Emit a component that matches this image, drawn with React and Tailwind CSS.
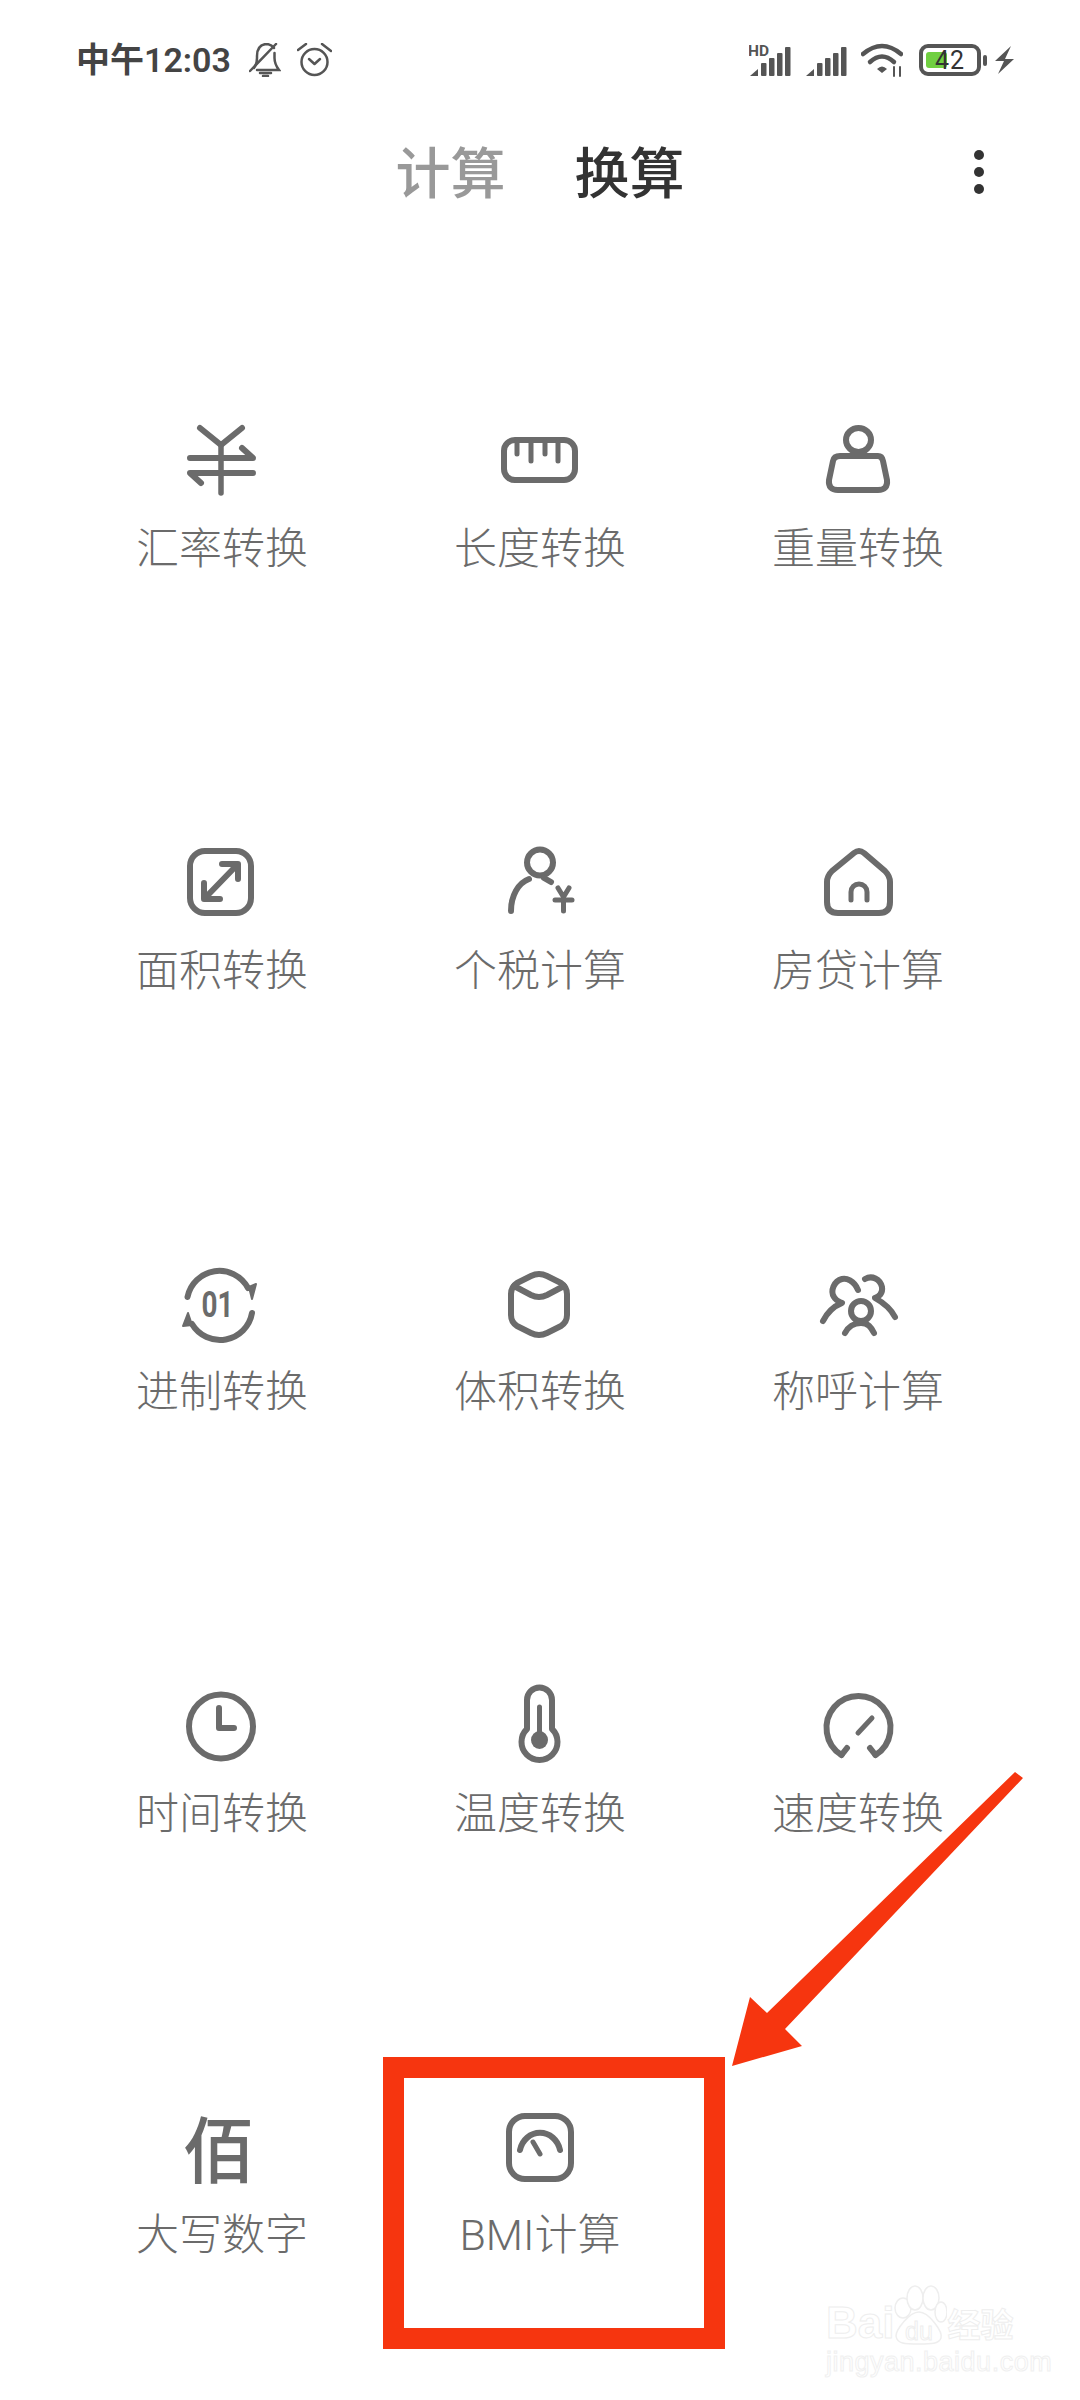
import React from "react";

const CJK = "font-['Roboto','Noto_Sans_CJK_SC',sans-serif]";

// every grid icon is drawn on the same 84x84 box
const Icon = ({ children, className = "" }) => (
  <svg
    viewBox="0 0 84 84"
    className={`w-[84px] h-[84px] ${className}`}
    fill="none"
    stroke="#6b6b6b"
    strokeWidth="6"
    strokeLinecap="round"
    strokeLinejoin="round"
  >
    {children}
  </svg>
);

const YenIcon = () => (
  <Icon>
    <path d="M20 10 L41 27 L62 10" />
    <path d="M41 27 V75" strokeWidth="5.5" />
    <path d="M10 40 H73 L62 30" />
    <path d="M73 55 H10 L21 65" />
  </Icon>
);

const RulerIcon = () => (
  <Icon>
    <rect x="6" y="22" width="71" height="40" rx="11" />
    <path d="M19 24 V36 M33 24 V43 M47 24 V36 M60 24 V43" strokeWidth="5" />
  </Icon>
);

const WeightIcon = () => (
  <Icon>
    <ellipse cx="42.5" cy="22" rx="12.5" ry="12" />
    <path d="M24 38 H62 Q66 38 67 43 L71 62 Q72 72 62 72 H22 Q12 72 13 62 L17 43 Q18 38 24 38 Z" />
  </Icon>
);

const AreaIcon = () => (
  <Icon>
    <rect x="10" y="11" width="61" height="62" rx="15" />
    <path d="M57 25 L25 58" />
    <path d="M42 24 H58 V39" />
    <path d="M24 43 V59 H40" />
  </Icon>
);

const TaxIcon = () => (
  <Icon>
    <circle cx="42" cy="22.5" r="13" />
    <path d="M31 39 C20 43 13 56 13 71" />
    <path d="M46 38 L53 42" />
    <path d="M60 48 L65.5 57 L71 48 M65.5 57 V71" strokeWidth="5" />
    <path d="M57 60 H74" strokeWidth="5" />
  </Icon>
);

const HouseIcon = () => (
  <Icon>
    <path d="M38 13 Q43 9 48 13 L69 31 Q74 36 74 42 V62 Q74 73 63 73 H22 Q11 73 11 62 V42 Q11 36 16 31 Z" />
    <path d="M35 60 V52 A8 8 0 0 1 51 52 V60" strokeWidth="5" />
  </Icon>
);

const BinaryIcon = () => (
  <Icon>
    <path d="M7.5 36 A32.5 32.5 0 0 1 68 27" />
    <path d="M12 63 A32.5 32.5 0 0 0 72 52" />
    <path d="M69 26 L76 23 L72 38 Z" fill="#6b6b6b" strokeWidth="2" />
    <path d="M3 65 L8 52 L12 64 Z" fill="#6b6b6b" strokeWidth="2" />
    <text
      x="37.5"
      y="56"
      textAnchor="middle"
      fontFamily="Roboto"
      fontWeight="700"
      fontSize="36"
      textLength="32"
      lengthAdjust="spacingAndGlyphs"
      fill="#6b6b6b"
      stroke="none"
    >
      01
    </text>
  </Icon>
);

const CubeIcon = () => (
  <Icon>
    <path d="M33 15 Q41 11 49 15 L63 22 Q69 26 69 33 V54 Q69 61 63 65 L49 72 Q41 76 33 72 L19 65 Q13 61 13 54 V33 Q13 26 19 22 Z" />
    <path d="M16 25 L33 34 Q41 38 49 34 L66 25" />
  </Icon>
);

const PeopleIcon = () => (
  <Icon>
    <path d="M42 29 C38 19 30 17 26 18 C18 20 14 30 18 36 C20 40 24 41 26 42 C16 46 10 54 7 60" />
    <path d="M49 18 C56 14 64 18 66 26 C67 32 63 36 59 37 C68 42 75 48 79 56" />
    <circle cx="45" cy="50" r="10" />
    <path d="M29 72 C32 66 38 62 45 62 C52 62 55 66 58 72" />
  </Icon>
);

const ClockIcon = () => (
  <Icon>
    <circle cx="41" cy="43.5" r="32" />
    <path d="M39 25 V45 H54" />
  </Icon>
);

const ThermoIcon = () => (
  <Icon>
    <path d="M29 17 A12.5 12.5 0 0 1 54 17 V46 A18 18 0 1 1 29 46 Z" />
    <path d="M41.5 24 V50" strokeWidth="5" />
    <ellipse cx="41.5" cy="57" rx="8.5" ry="9" fill="#6b6b6b" stroke="none" />
  </Icon>
);

const SpeedIcon = () => (
  <Icon>
    <path d="M25.5 72 A32 32 0 1 1 59.5 72" />
    <path d="M25.5 72 L31 65 M59.5 72 L54 65" />
    <path d="M42 50 L56 35" strokeWidth="5" />
  </Icon>
);

const ScaleIcon = () => (
  <Icon>
    <rect x="11" y="12" width="62" height="63" rx="16" />
    <path d="M22 46 A20.5 22 0 0 1 62 46" />
    <path d="M35 38 L42 50" strokeWidth="5" />
  </Icon>
);

const items = [
  { label: "汇率转换", icon: <YenIcon /> },
  { label: "长度转换", icon: <RulerIcon /> },
  { label: "重量转换", icon: <WeightIcon /> },
  { label: "面积转换", icon: <AreaIcon /> },
  { label: "个税计算", icon: <TaxIcon /> },
  { label: "房贷计算", icon: <HouseIcon /> },
  { label: "进制转换", icon: <BinaryIcon /> },
  { label: "体积转换", icon: <CubeIcon /> },
  { label: "称呼计算", icon: <PeopleIcon /> },
  { label: "时间转换", icon: <ClockIcon /> },
  { label: "温度转换", icon: <ThermoIcon /> },
  { label: "速度转换", icon: <SpeedIcon /> },
  {
    label: "大写数字",
    icon: (
      <span className="block w-[84px] h-[84px] pr-[6px] leading-[84px] text-center text-[72px] font-medium text-[#6b6b6b] font-['Noto_Sans_CJK_SC',sans-serif]">
        佰
      </span>
    ),
  },
  { label: "BMI计算", icon: <ScaleIcon /> },
];

const SignalBars = ({ hd }) => (
  <svg viewBox="0 -4 42 34" className="w-[42px] h-[34px]" fill="#555555">
    {hd && (
      <text x="-1" y="9" fontFamily="Roboto" fontWeight="700" fontSize="15.5">
        HD
      </text>
    )}
    <path d="M1 29 L9 22 V29 Z" />
    <rect x="12" y="16" width="5.5" height="13" rx="1" />
    <rect x="20" y="11" width="5.5" height="18" rx="1" />
    <rect x="28" y="6" width="5.5" height="23" rx="1" />
    <rect x="36" y="0" width="5.5" height="29" rx="1" />
  </svg>
);

const StatusBar = () => (
  <div className="h-[120px] flex items-center justify-between pl-[76px] pr-[66px]">
    <div className="flex items-center">
      <span className={`text-[34px] leading-[44px] font-semibold text-[#444444] ${CJK}`}>中午12:03</span>
      {/* muted bell */}
      <svg viewBox="0 0 32 34" className="w-[32px] h-[34px] ml-[18px]" fill="none" stroke="#555555" strokeWidth="2.5" strokeLinecap="round">
        <path d="M5 25 Q8 21 8 15 V13 Q8 2 17 1 Q22 1 25 5" />
        <path d="M25.5 10 V15 Q25.5 21 30 27 H8" />
        <path d="M11 30 H22 M14 33 H19" />
        <path d="M27 1 L1 28" />
      </svg>
      {/* alarm */}
      <svg viewBox="0 0 35 34" className="w-[35px] h-[34px] ml-[16px]" fill="none" stroke="#555555" strokeWidth="2.5" strokeLinecap="round" strokeLinejoin="round">
        <circle cx="17.5" cy="19" r="13" />
        <path d="M1 7 L9 1 M25 1 L34 8" />
        <path d="M12 16 L17.5 21 L23 16" />
      </svg>
    </div>
    <div className="flex items-center">
      <SignalBars hd />
      <span className="w-[14px]" />
      <SignalBars />
      <span className="w-[14px]" />
      {/* wifi */}
      <svg viewBox="0 0 42 34" className="w-[42px] h-[34px]" fill="none" stroke="#555555" strokeWidth="4.5" strokeLinecap="round">
        <path d="M2 11 Q21 -5 40 11" />
        <path d="M9 19 Q21 8 33 19" />
        <path d="M16 26 Q21 21 26 26 L21 30 Z" fill="#555555" stroke="none" />
        <path d="M33 24 V33 M39 24 V33" strokeWidth="2" />
      </svg>
      <span className="w-[16px]" />
      {/* battery */}
      <svg viewBox="0 0 70 32" className="w-[70px] h-[32px]" fill="none">
        <rect x="2" y="2" width="58" height="28" rx="7" stroke="#555555" strokeWidth="4" />
        <rect x="7" y="8" width="21" height="16" rx="3" fill="#70cf41" />
        <rect x="64" y="11" width="4" height="11" rx="2" fill="#555555" />
        <text x="31" y="25" textAnchor="middle" fontFamily="Roboto" fontSize="25" letterSpacing="1" fill="#333333">
          42
        </text>
      </svg>
      <span className="w-[6px]" />
      {/* charging bolt */}
      <svg viewBox="0 0 19 28" className="w-[19px] h-[28px]" fill="#555555">
        <path d="M16 0 L0 15 H9 L3 28 L19 13 H10 Z" />
      </svg>
    </div>
  </div>
);

const TabBar = () => (
  <div className="h-[104px] grid grid-cols-[1fr_auto_1fr] items-center">
    <span />
    <div className={`flex gap-[69px] pt-[4px] text-[55px] leading-[64px] font-medium ${CJK}`}>
      <span className="text-[#999999]">计算</span>
      <span className="text-[#333333]">换算</span>
    </div>
    <div className="flex flex-col gap-[7px] items-end pr-[96px]">
      <span className="w-[10px] h-[10px] rounded-full bg-[#333333]" />
      <span className="w-[10px] h-[10px] rounded-full bg-[#333333]" />
      <span className="w-[10px] h-[10px] rounded-full bg-[#333333]" />
    </div>
  </div>
);

const App = () => {
  return (
    <div className="relative w-[1080px] h-[2400px] overflow-hidden bg-white">
      <StatusBar />
      <TabBar />

      <div className="grid grid-cols-3 auto-rows-[421.5px] px-[63px]">
        {items.map((item) => (
          <div key={item.label} className="flex flex-col items-center pt-[194px] gap-[19px]">
            {item.icon}
            <span className={`text-[43px] leading-[56px] font-light text-[#6b6b6b] ${CJK}`}>{item.label}</span>
          </div>
        ))}
      </div>

      {/* red highlight box and arrow drawn on top of the screenshot */}
      <div className="absolute left-[383px] top-[2057px] w-[342px] h-[292px] border-[21px] border-[#f6350f]" />
      <svg viewBox="730 1770 296 298" className="absolute left-[730px] top-[1770px] w-[296px] h-[298px]">
        <path d="M1015 1772 L1023 1778 L785 2029 L802 2046 L732 2066 L750 1997 L767 2013 Z" fill="#f6350f" />
      </svg>

      {/* watermark */}
      <div className="absolute left-[826px] top-[2282px] w-[200px] flex flex-col items-start">
        <div className="flex items-end h-[64px]">
          <span className="text-[44px] leading-[46px] font-bold text-white font-['Liberation_Sans',sans-serif] [-webkit-text-stroke:1px_#eeeeee]">Bai</span>
          <svg viewBox="0 0 56 64" className="w-[56px] h-[64px] -ml-[3px]" fill="white" stroke="#eeeeee" strokeWidth="1.5">
            <ellipse cx="12" cy="26" rx="8" ry="10" />
            <ellipse cx="24" cy="16" rx="8" ry="12" />
            <ellipse cx="40" cy="16" rx="8" ry="12" />
            <ellipse cx="50" cy="30" rx="6" ry="10" />
            <path d="M28 30 C38 30 52 50 50 56 C48 62 40 62 28 62 C14 62 6 62 5 54 C5 48 18 30 28 30 Z" />
            <text x="28" y="58" textAnchor="middle" fontFamily="Liberation Sans" fontSize="25" strokeWidth="1">
              du
            </text>
          </svg>
          <span className="text-[33px] leading-[46px] font-bold text-white font-['Noto_Sans_CJK_SC',sans-serif] [-webkit-text-stroke:1px_#eeeeee]">经验</span>
        </div>
        <span className="text-[27px] leading-[32px] tracking-[0.5px] text-white font-['Liberation_Sans',sans-serif] [-webkit-text-stroke:1px_#f0f0f0]">jingyan.baidu.com</span>
      </div>
    </div>
  );
};

export default App;
